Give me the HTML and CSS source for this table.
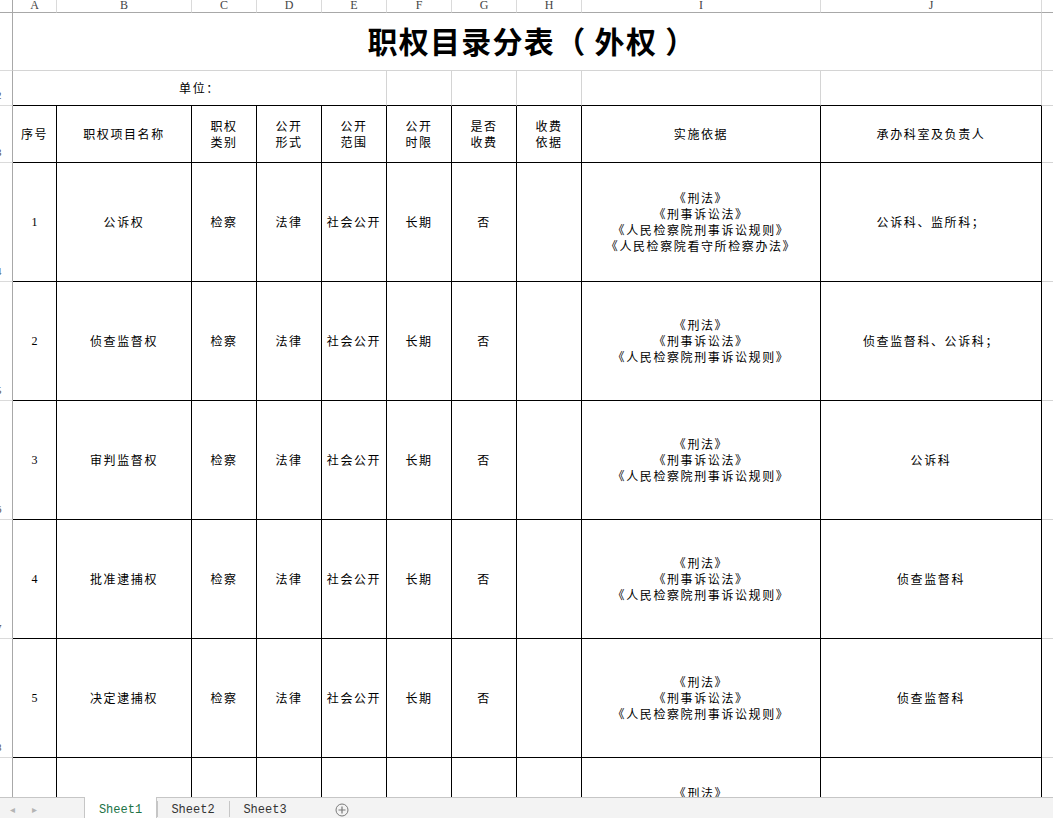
FILE: index.html
```html
<!DOCTYPE html>
<html lang="zh-CN">
<head>
<meta charset="utf-8">
<title>职权目录分表（外权）</title>
<link rel="stylesheet" href="styles.css">
</head>
<body>
<div class="app">
  <div class="sheet">
    <div class="grid">
      <!-- column header row -->
      <div class="ch corner"></div>
      <div class="ch">A</div>
      <div class="ch">B</div>
      <div class="ch">C</div>
      <div class="ch">D</div>
      <div class="ch">E</div>
      <div class="ch">F</div>
      <div class="ch">G</div>
      <div class="ch">H</div>
      <div class="ch">I</div>
      <div class="ch">J</div>
      <div class="ch last"></div>

      <!-- row 1: title -->
      <div class="rh"></div>
      <div class="cell gray title span10">职权目录分表（ 外权 ）</div>
      <div class="cell kcol"></div>

      <!-- row 2: unit -->
      <div class="rh"><span class="rn">2</span></div>
      <div class="cell gray topline span5">单位：</div>
      <div class="cell gray topline"></div>
      <div class="cell gray topline"></div>
      <div class="cell gray topline"></div>
      <div class="cell gray topline"></div>
      <div class="cell gray topline"></div>
      <div class="cell kcol"></div>

      <!-- row 3: header -->
      <div class="rh"><span class="rn">3</span></div>
      <div class="cell">序号</div>
      <div class="cell">职权项目名称</div>
      <div class="cell">职权<br>类别</div>
      <div class="cell">公开<br>形式</div>
      <div class="cell">公开<br>范围</div>
      <div class="cell">公开<br>时限</div>
      <div class="cell">是否<br>收费</div>
      <div class="cell">收费<br>依据</div>
      <div class="cell">实施依据</div>
      <div class="cell">承办科室及负责人</div>
      <div class="cell kcol"></div>

      <!-- data row 1 -->
      <div class="rh"><span class="rn">4</span></div>
      <div class="cell num">1</div>
      <div class="cell">公诉权</div>
      <div class="cell">检察</div>
      <div class="cell">法律</div>
      <div class="cell">社会公开</div>
      <div class="cell">长期</div>
      <div class="cell">否</div>
      <div class="cell"></div>
      <div class="cell">《刑法》<br>《刑事诉讼法》<br>《人民检察院刑事诉讼规则》<br>《人民检察院看守所检察办法》</div>
      <div class="cell">公诉科、监所科；</div>
      <div class="cell kcol"></div>

      <!-- data row 2 -->
      <div class="rh"><span class="rn">5</span></div>
      <div class="cell num">2</div>
      <div class="cell">侦查监督权</div>
      <div class="cell">检察</div>
      <div class="cell">法律</div>
      <div class="cell">社会公开</div>
      <div class="cell">长期</div>
      <div class="cell">否</div>
      <div class="cell"></div>
      <div class="cell">《刑法》<br>《刑事诉讼法》<br>《人民检察院刑事诉讼规则》</div>
      <div class="cell">侦查监督科、公诉科；</div>
      <div class="cell kcol"></div>

      <!-- data row 3 -->
      <div class="rh"><span class="rn">6</span></div>
      <div class="cell num">3</div>
      <div class="cell">审判监督权</div>
      <div class="cell">检察</div>
      <div class="cell">法律</div>
      <div class="cell">社会公开</div>
      <div class="cell">长期</div>
      <div class="cell">否</div>
      <div class="cell"></div>
      <div class="cell">《刑法》<br>《刑事诉讼法》<br>《人民检察院刑事诉讼规则》</div>
      <div class="cell">公诉科</div>
      <div class="cell kcol"></div>

      <!-- data row 4 -->
      <div class="rh"><span class="rn">7</span></div>
      <div class="cell num">4</div>
      <div class="cell">批准逮捕权</div>
      <div class="cell">检察</div>
      <div class="cell">法律</div>
      <div class="cell">社会公开</div>
      <div class="cell">长期</div>
      <div class="cell">否</div>
      <div class="cell"></div>
      <div class="cell">《刑法》<br>《刑事诉讼法》<br>《人民检察院刑事诉讼规则》</div>
      <div class="cell">侦查监督科</div>
      <div class="cell kcol"></div>

      <!-- data row 5 -->
      <div class="rh"><span class="rn">8</span></div>
      <div class="cell num">5</div>
      <div class="cell">决定逮捕权</div>
      <div class="cell">检察</div>
      <div class="cell">法律</div>
      <div class="cell">社会公开</div>
      <div class="cell">长期</div>
      <div class="cell">否</div>
      <div class="cell"></div>
      <div class="cell">《刑法》<br>《刑事诉讼法》<br>《人民检察院刑事诉讼规则》</div>
      <div class="cell">侦查监督科</div>
      <div class="cell kcol"></div>

      <!-- data row 6 (clipped) -->
      <div class="rh"><span class="rn">9</span></div>
      <div class="cell num">6</div>
      <div class="cell">立案监督权</div>
      <div class="cell">检察</div>
      <div class="cell">法律</div>
      <div class="cell">社会公开</div>
      <div class="cell">长期</div>
      <div class="cell">否</div>
      <div class="cell"></div>
      <div class="cell">《刑法》<br>《刑事诉讼法》<br>《人民检察院刑事诉讼规则》<br>《人民检察院看守所检察办法》</div>
      <div class="cell">侦查监督科</div>
      <div class="cell kcol"></div>
    </div>
  </div>

  <div class="tabs">
    <div class="nav">
      <span class="arrow">&#9666;</span>
      <span class="arrow">&#9656;</span>
    </div>
    <div class="tab active">Sheet1</div>
    <div class="tab">Sheet2</div>
    <div class="tab">Sheet3</div>
    <div class="add">
      <svg width="14" height="14" viewBox="0 0 14 14" aria-hidden="true">
        <circle cx="7" cy="7" r="6" fill="none" stroke="#7a7a7a" stroke-width="1"/>
        <path d="M7 3.5V10.5M3.5 7H10.5" stroke="#7a7a7a" stroke-width="1.2"/>
      </svg>
    </div>
  </div>
</div>
</body>
</html>
```

FILE: styles.css
```css
* { box-sizing: border-box; }

html, body {
  margin: 0;
  padding: 0;
  background: #ffffff;
}

body {
  width: 1053px;
  height: 818px;
  overflow: hidden;
  font-family: "Liberation Serif", "Noto Sans CJK SC", serif;
  color: #000;
}

.app {
  display: flex;
  flex-direction: column;
  width: 1053px;
  height: 818px;
}

.sheet {
  height: 797px;
  overflow: hidden;
  flex: none;
}

.grid {
  display: grid;
  grid-template-columns: 13px 44px 135px 65px 65px 65px 65px 65px 65px 239px 221px 11px;
  grid-template-rows: 13px 58px 35px 57px repeat(6, 119px);
}

/* column header */
.ch {
  border-right: 1px solid #dadada;
  border-bottom: 1px solid #a8a8a8;
  font-family: "Liberation Serif", serif;
  font-size: 12px;
  line-height: 11px;
  color: #444;
  text-align: center;
  overflow: hidden;
}
.ch.corner { border-right: 1px solid #a8a8a8; }
.ch.last { border-right: none; }

/* row header */
.rh {
  border-right: 1px solid #a8a8a8;
  border-bottom: 1px solid #dadada;
  overflow: hidden;
  display: flex;
  align-items: flex-end;
  padding-bottom: 4px;
}
.rn {
  font-family: "Liberation Serif", serif;
  font-size: 11px;
  line-height: 11px;
  color: #555;
  margin-left: -4px;
}

/* body cells */
.cell {
  border-right: 1px solid #000;
  border-bottom: 1px solid #000;
  display: flex;
  align-items: center;
  justify-content: center;
  text-align: center;
  font-family: "Noto Sans CJK SC", sans-serif;
  font-size: 12px;
  line-height: 16px;
  letter-spacing: 1.6px;
  white-space: nowrap;
  overflow: hidden;
}

.cell.num {
  font-family: "Liberation Serif", serif;
  letter-spacing: 0;
}

.cell.gray {
  border-right-color: #d4d4d4;
  border-bottom-color: #d4d4d4;
}
.cell.gray.topline {
  border-bottom-color: #000;
}

.cell.kcol {
  border-right: none;
  border-bottom-color: #d4d4d4;
}

.span10 { grid-column: span 10; }
.span5 { grid-column: span 5; }

.title {
  font-size: 30px;
  font-weight: 700;
  letter-spacing: 1.3px;
  line-height: 34px;
  padding-bottom: 4px;
  padding-left: 10px;
}

/* tab bar */
.tabs {
  flex: none;
  height: 21px;
  background: #f3f3f3;
  border-top: 1px solid #c6c6c6;
  display: flex;
  align-items: stretch;
  font-family: "Liberation Mono", monospace;
  font-size: 12px;
}

.nav {
  width: 85px;
  border-right: 1px solid #c6c6c6;
  display: flex;
  align-items: center;
  gap: 17px;
  padding-left: 10px;
  padding-top: 3px;
  margin-top: -1px;
}
.arrow {
  color: #b4b4b4;
  font-size: 10px;
  font-family: "DejaVu Sans", sans-serif;
}

.tab {
  width: 72px;
  display: flex;
  align-items: center;
  justify-content: center;
  padding-top: 4px;
  color: #333;
  position: relative;
}
.tab + .tab::before {
  content: "";
  position: absolute;
  left: 0;
  top: 3px;
  bottom: 1px;
  border-left: 1px solid #c6c6c6;
}
.tab:last-of-type::after {
  content: "";
  position: absolute;
  right: 0;
  top: 3px;
  bottom: 1px;
  border-right: 1px solid #c6c6c6;
}
.tab.active {
  background: #ffffff;
  color: #217346;
  margin-top: -1px;
  border-right: 1px solid #c6c6c6;
}

.add {
  display: flex;
  align-items: center;
  padding-left: 34px;
  padding-top: 3px;
}
```
